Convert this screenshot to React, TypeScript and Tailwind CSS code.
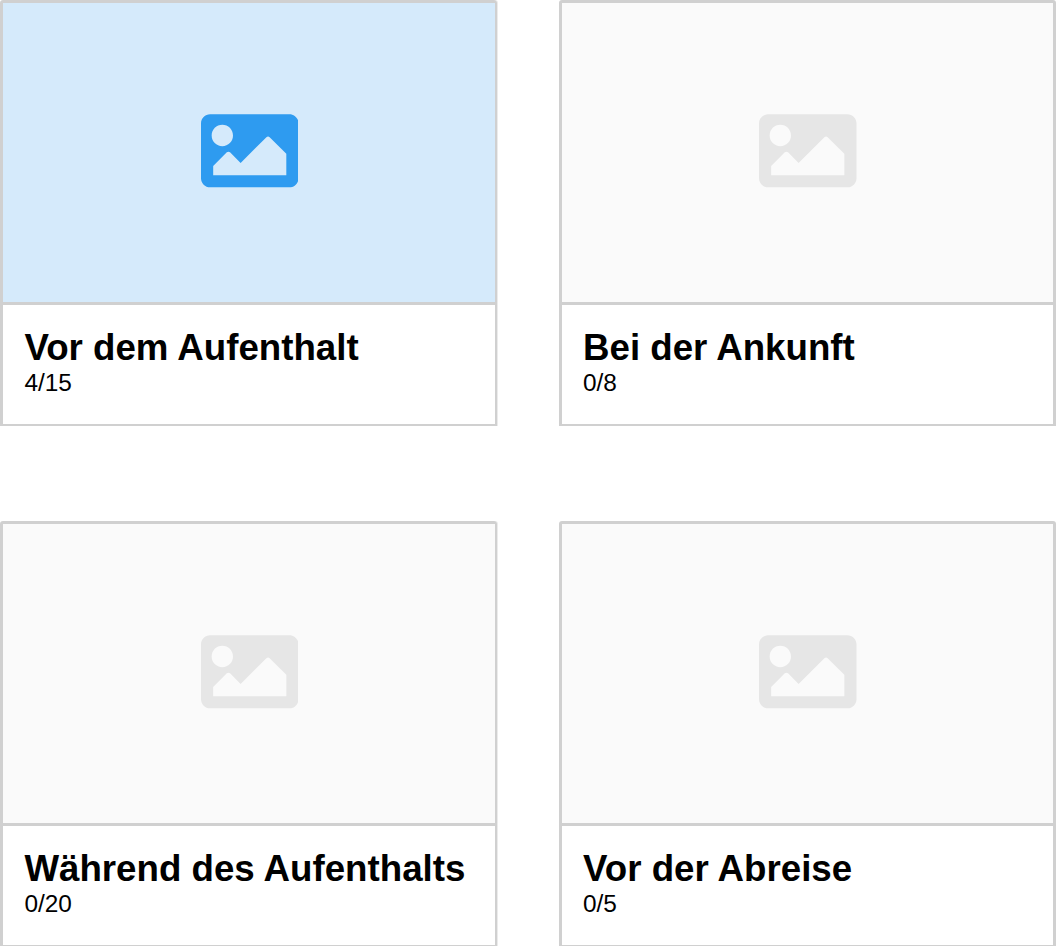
const cards = [
  { title: 'Vor dem Aufenthalt', count: '4/15', active: true },
  { title: 'Bei der Ankunft', count: '0/8', active: false },
  { title: 'Während des Aufenthalts', count: '0/20', active: false },
  { title: 'Vor der Abreise', count: '0/5', active: false },
];

function ImageIcon({ active }: { active: boolean }) {
  return (
    <svg viewBox="0 64 512 384" className={`h-[73.5px] w-[97.5px] ${active ? 'fill-[#2e9bf0]' : 'fill-[#e6e6e6]'}`}>
      <path d="M464 448H48c-26.51 0-48-21.49-48-48V112c0-26.51 21.49-48 48-48h416c26.51 0 48 21.49 48 48v288c0 26.51-21.49 48-48 48zM112 120c-30.928 0-56 25.072-56 56s25.072 56 56 56 56-25.072 56-56-25.072-56-56-56zM64 384h384V272l-87.515-87.515c-4.686-4.686-12.284-4.686-16.971 0L208 320l-55.515-55.515c-4.686-4.686-12.284-4.686-16.971 0L64 336v48z" />
    </svg>
  );
}

export default function App() {
  return (
    <main className="grid h-[946px] w-[1056px] grid-cols-[497px_497px] grid-rows-[426px_426px] justify-between gap-y-[95px] overflow-hidden bg-white font-['Liberation_Sans',sans-serif] text-black">
      {cards.map((card) => (
        <article key={card.title} className="group flex flex-col rounded-t-[3px] border-[3px] border-b-2 border-[#d0d0d0] odd:border-r-2 odd:shadow-[1px_0_0_#ebebeb]">
          <div className={`flex h-[302px] shrink-0 items-center justify-center border-b-[3px] border-[#d0d0d0] pb-[3px] pl-px ${card.active ? 'bg-[#d5eafb]' : 'bg-[#fafafa]'}`}>
            <ImageIcon active={card.active} />
          </div>
          <div className="px-[21px] pt-[22px] group-odd:pl-[21.4px]">
            <h2 className="text-[36.7px] leading-[42px] font-bold whitespace-nowrap">{card.title}</h2>
            <p className="text-[24.4px] leading-[28px]">{card.count}</p>
          </div>
        </article>
      ))}
    </main>
  );
}
